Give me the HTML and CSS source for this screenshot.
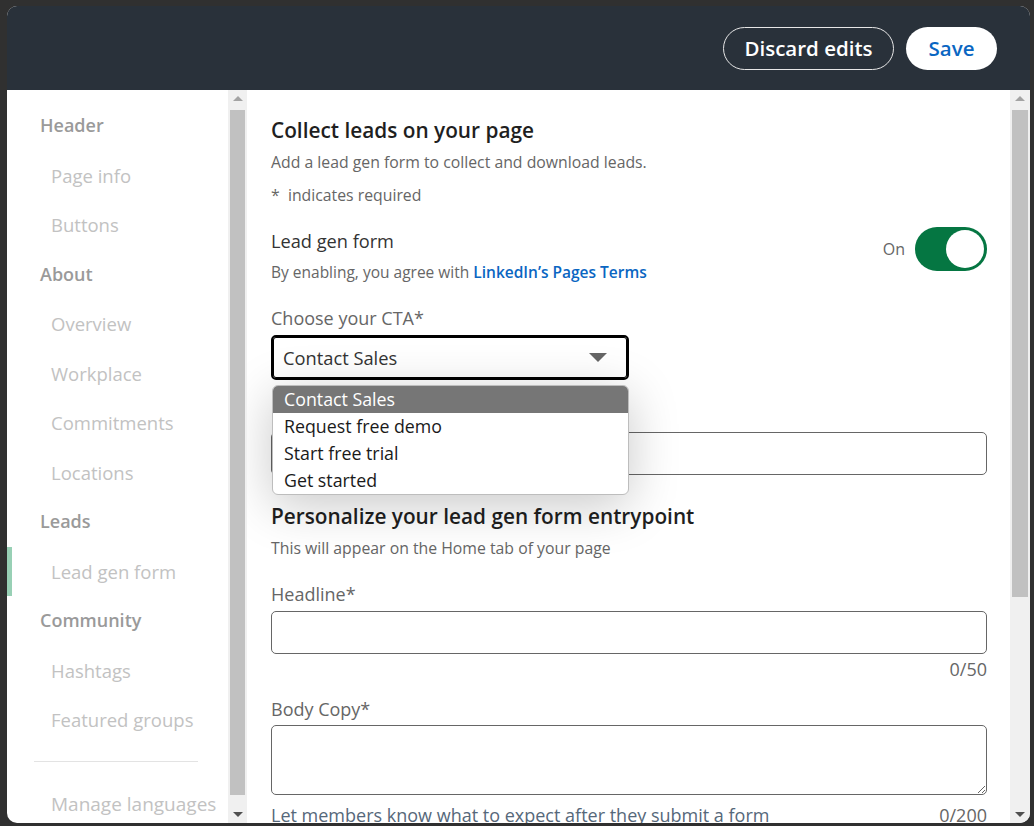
FILE: index.html
```html
<!DOCTYPE html>
<html lang="en">
<head>
  <meta charset="UTF-8">
  <title>Lead gen form</title>
  <link rel="stylesheet" href="styles.css">
</head>
<body>
  <div class="modal">
    <div class="modal-header">
      <button class="btn-outline">Discard edits</button>
      <button class="btn-save">Save</button>
    </div>

    <div class="modal-body">
      <!-- left navigation -->
      <div class="sidebar">
        <div class="nav-head">Header</div>
        <div class="nav-item">Page info</div>
        <div class="nav-item">Buttons</div>
        <div class="nav-head">About</div>
        <div class="nav-item">Overview</div>
        <div class="nav-item">Workplace</div>
        <div class="nav-item">Commitments</div>
        <div class="nav-item">Locations</div>
        <div class="nav-head">Leads</div>
        <div class="nav-item active">Lead gen form</div>
        <div class="nav-head">Community</div>
        <div class="nav-item">Hashtags</div>
        <div class="nav-item">Featured groups</div>
        <div class="nav-divider"></div>
        <div class="nav-item lang">Manage languages</div>
      </div>
      <div class="scrollbar">
        <div class="arrow up"></div>
        <div class="track"><div class="thumb side-thumb"></div></div>
        <div class="arrow down"></div>
      </div>

      <!-- main form -->
      <div class="main">
        <h2 class="title">Collect leads on your page</h2>
        <p class="sub">Add a lead gen form to collect and download leads.</p>
        <p class="sub required">*&nbsp; indicates required</p>

        <div class="toggle-row">
          <div>
            <div class="field-title">Lead gen form</div>
            <p class="sub terms">By enabling, you agree with <a href="#">LinkedIn’s Pages Terms</a></p>
          </div>
          <div class="toggle-wrap">
            <span class="toggle-label">On</span>
            <div class="toggle"><div class="knob"></div></div>
          </div>
        </div>

        <div class="label cta-label">Choose your CTA*</div>
        <div class="select-wrap">
          <div class="select">
            <span>Contact Sales</span>
            <svg width="18" height="9" viewBox="0 0 18 9"><polygon points="0,0 18,0 9,9" fill="#666"/></svg>
          </div>
          <ul class="dropdown">
            <li class="selected">Contact Sales</li>
            <li>Request free demo</li>
            <li>Start free trial</li>
            <li>Get started</li>
          </ul>
        </div>
        <input class="input url-input" type="text">

        <h2 class="title second">Personalize your lead gen form entrypoint</h2>
        <p class="sub">This will appear on the Home tab of your page</p>

        <div class="label">Headline*</div>
        <input class="input" type="text">
        <div class="counter">0/50</div>

        <div class="label body-label">Body Copy*</div>
        <textarea class="textarea"></textarea>
        <div class="help-row">
          <span class="help">Let members know what to expect after they submit a form</span>
          <span class="count-inline">0/200</span>
        </div>
      </div>
      <div class="scrollbar main-bar">
        <div class="arrow up"></div>
        <div class="track"><div class="thumb main-thumb"></div></div>
        <div class="arrow down"></div>
      </div>
    </div>
  </div>
</body>
</html>
```

FILE: styles.css
```css
body {
  margin: 0;
  padding: 6px 4px 0 7px;
  height: 826px;
  box-sizing: border-box;
  overflow: hidden;
  background-color: #303030;
  font-family: "Open Sans", "Noto Sans", sans-serif;
}

.modal {
  height: 817px;
  background-color: #fff;
  border-radius: 10px;
  overflow: hidden;
  display: flex;
  flex-direction: column;
}

.modal-header {
  height: 84px;
  flex-shrink: 0;
  background-color: #29313a;
  display: flex;
  justify-content: flex-end;
  align-items: center;
  gap: 12px;
  padding-right: 33px;
}

.modal-header button {
  height: 43px;
  border-radius: 22px;
  font-family: inherit;
  font-size: 20.5px;
  font-weight: 600;
  cursor: pointer;
  padding: 0;
}

.btn-outline {
  width: 171px;
  background: transparent;
  color: #fff;
  border: 1px solid #e6e6e6;
}

.btn-save {
  width: 91px;
  background: #fff;
  color: #0a66c2;
  border: none;
}

.modal-body {
  flex: 1;
  display: flex;
  min-height: 0;
}

/* sidebar */
.sidebar {
  width: 221px;
  flex-shrink: 0;
  padding-top: 11px;
}

.nav-head,
.nav-item {
  height: 49.5px;
  line-height: 49.5px;
  white-space: nowrap;
}

.nav-head {
  padding-left: 33px;
  font-size: 18px;
  color: #9a9a9a;
  font-weight: 600;
}

.nav-item {
  padding-left: 44px;
  font-size: 18.5px;
  color: #c2c2c2;
  font-weight: 500;
}

.nav-item.lang {
  font-size: 19px;
}

.nav-item.active {
  padding-left: 39px;
  border-left: 5px solid #98d0b5;
}

.nav-divider {
  width: 164px;
  margin: 16px 0 18px 27px;
  border-top: 1px solid #e3e3e3;
}

/* fake scrollbars */
.scrollbar {
  width: 19px;
  flex-shrink: 0;
  background-color: #f0f0f0;
  display: flex;
  flex-direction: column;
}

.main-bar {
  width: 20px;
}

.arrow {
  height: 17px;
  display: flex;
  justify-content: center;
  align-items: center;
}

.arrow::after {
  content: "";
  border-left: 5px solid transparent;
  border-right: 5px solid transparent;
}

.arrow.up::after {
  border-bottom: 5px solid #a3a3a3;
}

.arrow.down::after {
  border-top: 5px solid #505050;
}

.track {
  flex: 1;
  padding: 3px 2px;
}

.thumb {
  background-color: #c1c1c1;
}

.side-thumb {
  height: 685px;
}

.main-thumb {
  height: 487px;
}

/* main form */
.main {
  flex: 1;
  padding: 0 23px 0 24px;
  position: relative;
  overflow: hidden;
  color: #1f1f1f;
}

.title {
  margin: 26px 0 0;
  font-size: 20.8px;
  line-height: 28px;
  font-weight: 600;
  color: #1f1f1f;
}

.title.second {
  margin-top: 27px;
}

.sub {
  margin: 8px 0 0;
  font-size: 15.8px;
  line-height: 20px;
  color: #666;
}

.required {
  margin-top: 13px;
}

.toggle-row {
  margin-top: 24px;
  display: flex;
  justify-content: space-between;
  align-items: flex-start;
}

.field-title {
  font-size: 18.2px;
  line-height: 24px;
  color: #333;
}

.terms {
  margin-top: 9px;
  font-size: 15.5px;
}

.terms a {
  color: #0a66c2;
  font-weight: 600;
  text-decoration: none;
}

.toggle-wrap {
  display: flex;
  align-items: center;
  gap: 10px;
  margin-top: -2px;
}

.toggle-label {
  font-size: 16px;
  color: #666;
}

.toggle {
  width: 72px;
  height: 44px;
  box-sizing: border-box;
  border-radius: 22px;
  background-color: #057642;
  display: flex;
  justify-content: flex-end;
  align-items: center;
  padding-right: 3px;
}

.knob {
  width: 38px;
  height: 38px;
  border-radius: 50%;
  background-color: #fff;
}

.label {
  margin-top: 24px;
  font-size: 18px;
  line-height: 24px;
  color: #666;
}

.select-wrap {
  position: relative;
  width: 358px;
  margin-top: 5px;
}

.select {
  height: 45px;
  box-sizing: border-box;
  border: 2px solid #000;
  box-shadow: 0 0 0 1px #000 inset;
  border-radius: 5px;
  display: flex;
  justify-content: space-between;
  align-items: center;
  padding: 0 20px 0 10px;
  font-size: 18.3px;
  color: #333;
}

.dropdown {
  position: absolute;
  top: 50px;
  left: 1px;
  width: 355px;
  margin: 0;
  padding: 0;
  list-style: none;
  background-color: #fff;
  border: 1px solid #bdbdbd;
  border-radius: 6px;
  overflow: hidden;
  box-shadow: 0 10px 50px rgba(0, 0, 0, 0.22);
  z-index: 2;
}

.dropdown li {
  height: 27px;
  line-height: 27px;
  padding-left: 11px;
  font-size: 17.8px;
  color: #1a1a1a;
}

.dropdown li.selected {
  background-color: #767676;
  color: #fff;
}

.input {
  display: block;
  width: 100%;
  height: 43px;
  box-sizing: border-box;
  margin-top: 5px;
  border: 1px solid #666;
  border-radius: 5px;
  font-family: inherit;
}

.url-input {
  margin-top: 52px;
}

.counter {
  margin-top: 3px;
  text-align: right;
  font-size: 18px;
  line-height: 24px;
  color: #666;
}

.body-label {
  margin-top: 16px;
}

.textarea {
  display: block;
  width: 100%;
  height: 70px;
  box-sizing: border-box;
  margin-top: 4px;
  border: 1px solid #666;
  border-radius: 5px;
  resize: vertical;
  font-family: inherit;
}

.help-row {
  margin-top: 8px;
  display: flex;
  justify-content: space-between;
  font-size: 18px;
  line-height: 24px;
}

.help {
  color: #56687a;
}

.count-inline {
  color: #666;
}
```
